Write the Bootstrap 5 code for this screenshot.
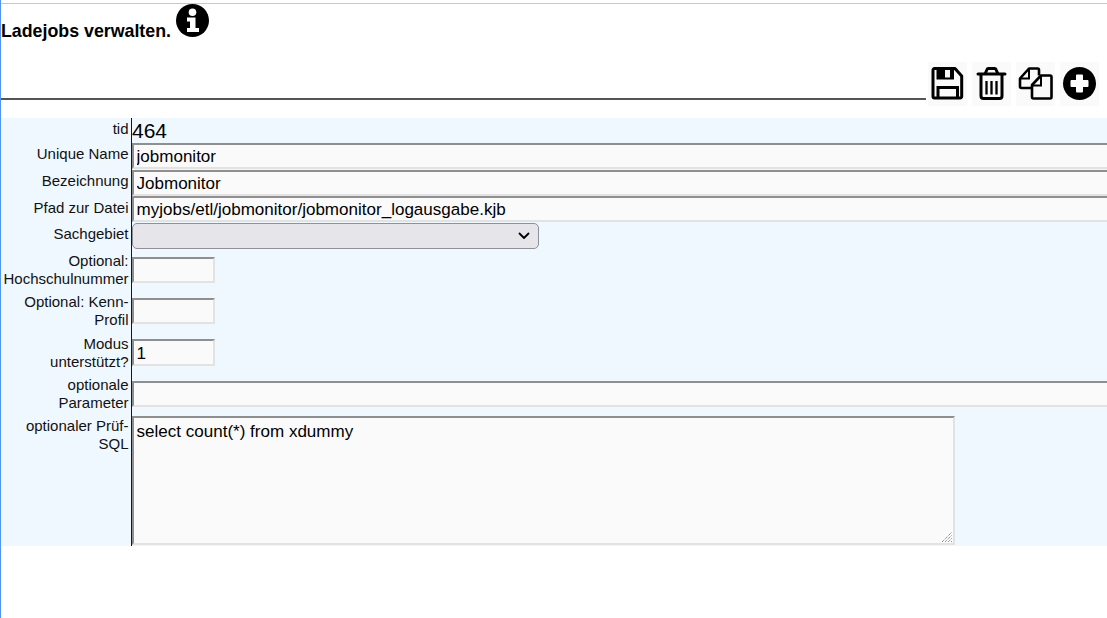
<!DOCTYPE html>
<html lang="de">
<head>
<meta charset="utf-8">
<title>Ladejobs verwalten</title>
<link href="https://cdn.jsdelivr.net/npm/bootstrap@5.3.0/dist/css/bootstrap.min.css" rel="stylesheet">
<style>
html,body{height:100%;}
body{font-family:"Liberation Sans",Arial,sans-serif;background:#fff;color:#000;overflow:hidden;}
.page-shell{height:618px;border-left:1px solid #4f94ef;overflow:hidden;}
.top-rule{height:4px;border-bottom:1px solid #c8c8c8;}
.head-row{height:58px;}
.page-title{font-size:17.8px;font-weight:700;line-height:20px;margin:17px 5px 0 0;}
.info-svg{display:block;width:33px;height:33px;}
.tool-row{height:37px;}
.tool-line{height:2px;background:#555;margin-top:36px;flex:0 0 925px;}
.tool-btn{width:39px;height:44px;background:#fafafa;border:0;padding:0;}
.tool-btn svg{width:35px;height:35px;display:block;margin:-2px auto 0;}
.tools{margin-left:2px;gap:5px;height:44px;}
.form-zone{background:#f0f8ff;margin-top:19px;height:428px;width:1106px;overflow:hidden;}
.f-row{display:flex;}
.f-label{flex:0 0 130px;text-align:right;font-size:15px;line-height:18px;color:#111;padding-right:2.5px;padding-left:2px;}
.f-val{flex:1 1 auto;min-width:0;border-left:1px solid #0000cd;}
.static-val{font-size:21px;line-height:26px;}
.f-input{display:block;background:#fafafa;color:#000;font-family:"Liberation Sans",Arial,sans-serif;font-size:17.05px;line-height:20px;padding:2px 2.5px 0;border:2px solid;border-color:#8f8f8f #e2e2e2 #e2e2e2 #8f8f8f;height:26px;border-radius:0;outline:0;}
.f-wide{width:1000px;}
.f-small{width:83px;}
.f-tall{height:27px;}
.f-select{width:407px;height:26px;background-color:#e6e5ea;border:1px solid #8f8f9d;border-radius:5px;appearance:none;padding:0;display:block;background-image:url("data:image/svg+xml,%3Csvg xmlns='http://www.w3.org/2000/svg' viewBox='0 0 16 16'%3E%3Cpath d='M3.500 5.500l4.500 4.500 4.500-4.500' fill='none' stroke='%23000' stroke-width='1.800' stroke-linecap='round' stroke-linejoin='round'/%3E%3C/svg%3E");background-repeat:no-repeat;background-position:right 6px center;background-size:16px 16px;}
.area-wrap{position:relative;width:823px;height:129px;margin-top:-1px;}
.f-area{display:block;width:823px;height:129px;background:#fafafa;font-family:"Liberation Sans",Arial,sans-serif;font-size:17.05px;line-height:20px;padding:4px 2.5px 2px;border:2px solid;border-color:#8f8f8f #e2e2e2 #e2e2e2 #8f8f8f;border-radius:0;outline:0;resize:none;}
.grip-mark{position:absolute;right:3px;bottom:3px;width:10px;height:10px;}
.f-stretch{height:129px;}
.h-tid{height:25px;}.h-1{height:27px;}.h-2{height:26px;}.h-3{height:27px;}.h-4{height:29px;}
.h-5{height:41px;}.h-6{height:42px;}
.lab-pad{padding-top:2px;}
.lab-pad3{padding-top:3px;}
.lab-pad1{padding-top:1px;}
.val-gap{padding-top:5px;}
</style>
</head>
<body>
<div class="page-shell">
  <div class="top-rule"></div>
  <div class="head-row d-flex align-items-start">
    <h1 class="page-title">Ladejobs verwalten.</h1>
    <svg class="info-svg" viewBox="0 0 33 33" role="img" aria-label="Info"><circle cx="16.500" cy="16.500" r="16.500" fill="#000"/><circle cx="16.500" cy="8.200" r="3.800" fill="#fff"/><path d="M11 13.500h8.500v10.500h3.500v4H11v-4h3v-6.500h-3z" fill="#fff"/></svg>
  </div>
  <div class="tool-row d-flex align-items-start">
    <div class="tool-line"></div>
    <div class="tools d-flex">
      <button class="tool-btn" type="button" aria-label="Speichern"><svg viewBox="0 0 35 35"><path d="M4.500 2.500H25l6.700 7.500v20.500a1.500 1.500 0 0 1-1.500 1.500H4.500A1.500 1.500 0 0 1 3 30.500V4a1.500 1.500 0 0 1 1.500-1.500z" fill="none" stroke="#000" stroke-width="3" stroke-linejoin="round"/><path d="M6.500 3h17.500v10.500H6.500z" fill="#000"/><path d="M15 4h5v7.500h-5z" fill="#fafafa"/><path d="M8 32V21.500h19.500V32" fill="none" stroke="#000" stroke-width="3"/></svg></button>
      <button class="tool-btn" type="button" aria-label="Löschen"><svg viewBox="0 0 35 35"><path d="M4 8h27" stroke="#000" stroke-width="3" stroke-linecap="round"/><path d="M11 8l2-4.500a1.500 1.500 0 0 1 1.500-1h6a1.500 1.500 0 0 1 1.500 1L24 8" fill="none" stroke="#000" stroke-width="3"/><path d="M7 8v22a2.500 2.500 0 0 0 2.500 2.500h16a2.500 2.500 0 0 0 2.500-2.500V8" fill="none" stroke="#000" stroke-width="3"/><path d="M12.500 15v13.500M17.500 15v13.500M22.500 15v13.500" stroke="#000" stroke-width="2.300"/></svg></button>
      <button class="tool-btn" type="button" aria-label="Kopieren"><svg viewBox="0 0 35 35"><path d="M13.500 22H3.500A1.500 1.500 0 0 1 2 20.500v-8L11 2.500h8.500a1.500 1.500 0 0 1 1.500 1.500v5.500" fill="none" stroke="#000" stroke-width="2.600" stroke-linejoin="round"/><path d="M11 3v9.500H2.500" fill="none" stroke="#000" stroke-width="2"/><path d="M14 19l9-9.500h9a1.500 1.500 0 0 1 1.500 1.500v20a1.500 1.500 0 0 1-1.500 1.500H15.500A1.500 1.500 0 0 1 14 31z" fill="none" stroke="#000" stroke-width="2.600" stroke-linejoin="round"/><path d="M23 10v9.500h-8.500" fill="none" stroke="#000" stroke-width="2"/></svg></button>
      <button class="tool-btn" type="button" aria-label="Neu"><svg viewBox="0 0 35 35"><circle cx="17.500" cy="17.500" r="16.500" fill="#000"/><path d="M15 8.500h5a1 1 0 0 1 1 1V14h4.500a1 1 0 0 1 1 1v5a1 1 0 0 1-1 1H21v4.500a1 1 0 0 1-1 1h-5a1 1 0 0 1-1-1V21H9.500a1 1 0 0 1-1-1v-5a1 1 0 0 1 1-1H14V9.500a1 1 0 0 1 1-1z" fill="#fff"/></svg></button>
    </div>
  </div>
  <form class="form-zone">
    <div class="f-row h-tid"><label class="f-label lab-pad">tid</label><div class="f-val static-val">464</div></div>
    <div class="f-row h-1"><label class="f-label lab-pad" for="a1">Unique Name</label><div class="f-val"><input id="a1" class="f-input f-wide" value="jobmonitor"></div></div>
    <div class="f-row h-2"><label class="f-label lab-pad" for="a2">Bezeichnung</label><div class="f-val"><input id="a2" class="f-input f-wide" value="Jobmonitor"></div></div>
    <div class="f-row h-3"><label class="f-label lab-pad3" for="a3">Pfad zur Datei</label><div class="f-val"><input id="a3" class="f-input f-wide" value="myjobs/etl/jobmonitor/jobmonitor_logausgabe.kjb"></div></div>
    <div class="f-row h-4"><label class="f-label lab-pad" for="a4">Sachgebiet</label><div class="f-val"><select id="a4" class="f-select"><option></option></select></div></div>
    <div class="f-row h-5"><label class="f-label" for="a5">Optional: Hochschulnummer</label><div class="f-val val-gap"><input id="a5" class="f-input f-small"></div></div>
    <div class="f-row h-5"><label class="f-label" for="a6">Optional: Kenn-Profil</label><div class="f-val val-gap"><input id="a6" class="f-input f-small"></div></div>
    <div class="f-row h-6"><label class="f-label lab-pad1" for="a7">Modus unterstützt?</label><div class="f-val val-gap"><input id="a7" class="f-input f-small f-tall" value="1"></div></div>
    <div class="f-row h-5"><label class="f-label" for="a8">optionale Parameter</label><div class="f-val val-gap"><input id="a8" class="f-input f-wide"></div></div>
    <div class="f-row f-stretch"><label class="f-label" for="a9">optionaler Prüf-SQL</label><div class="f-val"><div class="area-wrap"><textarea id="a9" class="f-area">select count(*) from xdummy</textarea><svg class="grip-mark" viewBox="0 0 10 10"><path d="M0 10L10 0M3 10l7-7M6 10l4-4M9 10l1-1" stroke="#666" stroke-width="1" stroke-dasharray="1 1"/></svg></div></div></div>
  </form>
</div>
<script src="https://cdn.jsdelivr.net/npm/bootstrap@5.3.0/dist/js/bootstrap.bundle.min.js"></script>
</body>
</html>
